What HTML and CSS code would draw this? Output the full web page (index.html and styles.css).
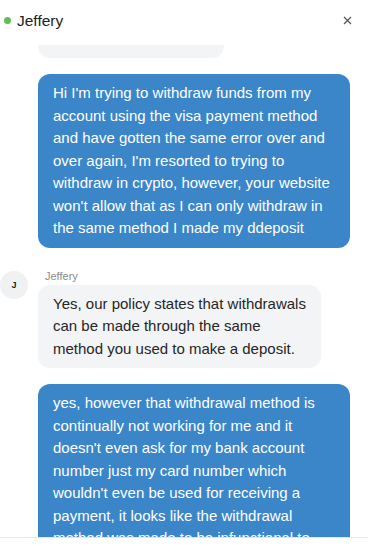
FILE: index.html
```html
<!DOCTYPE html>
<html lang="en">
<head>
<meta charset="utf-8">
<title>Chat with Jeffery</title>
<link rel="stylesheet" href="styles.css">
</head>
<body>
<div class="chat">
  <header class="chat-header">
    <div class="chat-title">
      <span class="status-dot"></span>
      <span class="chat-name">Jeffery</span>
    </div>
    <button class="close-btn" aria-label="Close">
      <svg width="9" height="9" viewBox="0 0 9 9"><path d="M1 1L8 8M8 1L1 8" stroke="#555" stroke-width="1.2" fill="none"/></svg>
    </button>
  </header>
  <div class="messages">
    <div class="msg msg-agent msg-partial">
      <div class="bubble bubble-agent">Let me check that.</div>
    </div>
    <div class="msg msg-user">
      <div class="bubble bubble-user">Hi I'm trying to withdraw funds from my account using the visa payment method and have gotten the same error over and over again, I'm resorted to trying to withdraw in crypto, however, your website won't allow that as I can only withdraw in the same method I made my ddeposit</div>
    </div>
    <div class="msg msg-agent msg-group">
      <div class="avatar">J</div>
      <div class="agent-col">
        <div class="sender">Jeffery</div>
        <div class="bubble bubble-agent">Yes, our policy states that withdrawals can be made through the same method you used to make a deposit.</div>
      </div>
    </div>
    <div class="msg msg-user">
      <div class="bubble bubble-user">yes, however that withdrawal method is continually not working for me and it doesn't even ask for my bank account number just my card number which wouldn't even be used for receiving a payment, it looks like the withdrawal method was made to be infunctional to</div>
    </div>
  </div>
  <footer class="chat-footer"></footer>
</div>
</body>
</html>
```
FILE: styles.css
```css
* { box-sizing: border-box; }
html, body {
  margin: 0;
  padding: 0;
  background: #fff;
}
body {
  font-family: "Liberation Sans", Arial, sans-serif;
  color: #222;
}
.chat {
  width: 368px;
  height: 552px;
  display: flex;
  flex-direction: column;
  overflow: hidden;
}
.chat-header {
  height: 45px;
  flex: 0 0 45px;
  display: flex;
  align-items: center;
  justify-content: space-between;
  padding: 0 16px 4px 4px;
  background: #fff;
}
.chat-title {
  display: flex;
  align-items: center;
  gap: 6px;
}
.status-dot {
  width: 7px;
  height: 7px;
  border-radius: 50%;
  background: #5cbf5c;
}
.chat-name {
  font-size: 15.5px;
  color: #222;
}
.close-btn {
  border: 0;
  background: none;
  padding: 0;
  display: flex;
  width: 9px;
  height: 9px;
}
.messages {
  flex: 1;
  overflow: hidden;
  display: flex;
  flex-direction: column;
  gap: 16px;
  padding: 0 18px 0 0;
}
.msg {
  display: flex;
}
.msg-partial {
  margin-top: -25.5px;
  padding-left: 38px;
}
.msg-user {
  padding-left: 38px;
}
.bubble {
  font-size: 15px;
  line-height: 22.5px;
  padding: 8px 15px;
  border-radius: 12px;
}
.bubble-user {
  width: 312px;
  background: #3a86c8;
  color: #fff;
}
.bubble-agent {
  max-width: 283px;
  padding-right: 12px;
  background: #f3f4f6;
  color: #262626;
}
.msg-partial .bubble-agent {
  width: 186px;
  white-space: nowrap;
  overflow: hidden;
}
.msg-group {
  margin-top: 5px;
  gap: 10px;
}
.avatar {
  width: 28px;
  height: 28px;
  flex: 0 0 28px;
  margin-top: 2px;
  border-radius: 50%;
  background: #f0f1f3;
  display: flex;
  align-items: center;
  justify-content: center;
  font-size: 9px;
  font-weight: 700;
  color: #222;
}
.agent-col {
  display: flex;
  flex-direction: column;
}
.sender {
  font-size: 11px;
  line-height: 14px;
  color: #8a8a8a;
  margin-bottom: 2px;
  padding-left: 7px;
}
.chat-footer {
  height: 15px;
  flex: 0 0 15px;
  border-top: 1px solid #e6e6e6;
  background: #fff;
}
```
